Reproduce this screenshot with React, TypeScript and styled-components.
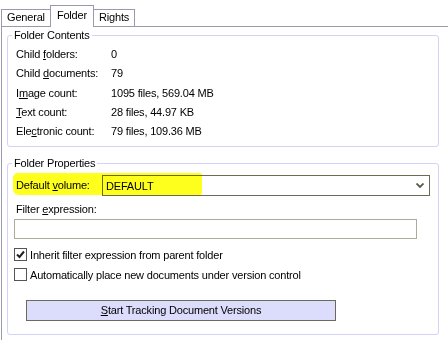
import React from 'react';
import styled, { createGlobalStyle } from 'styled-components';

const Global = createGlobalStyle`
  html, body { margin: 0; padding: 0; background: #fff; }
  body {
    font-family: 'Liberation Sans', Arial, sans-serif;
    font-size: 11px;
    letter-spacing: -0.18px;
    color: #000;
  }
`;

const Page = styled.div`
  width: 448px;
  height: 340px;
  overflow: hidden;
  background: #fff;
`;

const TabStrip = styled.div`
  display: flex;
  align-items: flex-end;
  height: 26px;
  padding-left: 1px;
  position: relative;
  z-index: 1;
`;

const Tab = styled.div<{ $active?: boolean }>`
  box-sizing: border-box;
  position: relative;
  height: ${p => (p.$active ? '22px' : '17px')};
  padding: ${p => (p.$active ? '2px 6px 0' : '0 5px')};
  margin: ${p => (p.$active ? '0 -1px -1px' : '0')};
  z-index: ${p => (p.$active ? 2 : 1)};
  border: 1px solid #9a9aae;
  border-bottom: none;
  background: #fff;
  line-height: 15px;
  white-space: nowrap;
`;

const Panel = styled.div`
  margin-left: 1px;
  border-top: 1px solid #9a9aae;
  border-left: 1px solid #9a9aae;
  height: 320px;
  display: flex;
  flex-direction: column;
`;

const Group = styled.fieldset<{ $top: number; $pt: number; $pb: number }>`
  margin: ${p => p.$top}px 9px 0 5px;
  padding: ${p => p.$pt}px 6px ${p => p.$pb}px 6px;
  border: 1px solid #d2d2fa;
  border-radius: 3px;
  min-width: 0;
`;

const Legend = styled.legend`
  padding: 0 2px;
  margin-left: -2px;
  line-height: 13px;
`;

const InfoGrid = styled.div`
  display: grid;
  grid-template-columns: 95px 1fr;
  grid-auto-rows: 19.25px;
  align-items: center;
  padding-left: 2px;
`;

const Cell = styled.span`
  line-height: 13px;
  white-space: nowrap;
`;

const Key = styled.u`
  text-decoration: underline;
  text-underline-offset: 1px;
`;

const VolumeRow = styled.div`
  position: relative;
  display: flex;
  align-items: center;
  height: 21px;
`;

const FieldLabel = styled.span<{ $width?: number }>`
  box-sizing: border-box;
  width: ${p => (p.$width ? `${p.$width}px` : 'auto')};
  padding-left: 2px;
  line-height: 13px;
  white-space: nowrap;
`;

const Combo = styled.div`
  box-sizing: border-box;
  width: 328px;
  height: 21px;
  border: 1px solid #6b6b55;
  background: #fff;
  display: flex;
  align-items: center;
  justify-content: space-between;
  padding: 0 5px 0 3px;
`;

const Highlight = styled.div`
  position: absolute;
  left: -1px;
  top: -2px;
  width: 189px;
  height: 22px;
  background: #ffff1e;
  border-radius: 5px 2px 2px 6px;
  mix-blend-mode: multiply;
  pointer-events: none;
`;

const StackLabel = styled.div`
  margin-top: 7px;
  padding-left: 2px;
  line-height: 13px;
`;

const TextBox = styled.div`
  box-sizing: border-box;
  margin-top: 3px;
  width: 403px;
  height: 20px;
  border: 1px solid #acac9e;
  background: #fff;
`;

const CheckRow = styled.div<{ $mt: number }>`
  display: flex;
  align-items: center;
  gap: 3px;
  height: 15px;
  margin-top: ${p => p.$mt}px;
`;

const Box = styled.span`
  box-sizing: border-box;
  width: 13px;
  height: 13px;
  border: 1px solid #555;
  background: #fff;
  display: flex;
  align-items: center;
  justify-content: center;
`;

const Button = styled.div`
  box-sizing: border-box;
  margin: 18px 0 0 12px;
  width: 310px;
  height: 21px;
  border: 1px solid #6b6b55;
  background: #dcdcfc;
  display: flex;
  align-items: center;
  justify-content: center;
  line-height: 13px;
`;

const rows: Array<[React.ReactNode, string]> = [
  [<>Child <Key>f</Key>olders:</>, '0'],
  [<>Child <Key>d</Key>ocuments:</>, '79'],
  [<>I<Key>m</Key>age count:</>, '1095 files, 569.04 MB'],
  [<><Key>T</Key>ext count:</>, '28 files, 44.97 KB'],
  [<>Ele<Key>c</Key>tronic count:</>, '79 files, 109.36 MB'],
];

export default function App() {
  return (
    <Page>
      <Global />
      <TabStrip>
        <Tab>General</Tab>
        <Tab $active>Folder</Tab>
        <Tab>Rights</Tab>
      </TabStrip>
      <Panel>
        <Group $top={2} $pt={3} $pb={5}>
          <Legend>Folder Contents</Legend>
          <InfoGrid>
            {rows.map(([k, v], i) => (
              <React.Fragment key={i}>
                <Cell>{k}</Cell>
                <Cell>{v}</Cell>
              </React.Fragment>
            ))}
          </InfoGrid>
        </Group>
        <Group $top={10} $pt={5} $pb={13}>
          <Legend>Folder Properties</Legend>
          <VolumeRow>
            <FieldLabel $width={88}>Default <Key>v</Key>olume:</FieldLabel>
            <Combo>
              <span>DEFAULT</span>
              <svg width="8" height="5" viewBox="0 0 8 5">
                <path d="M0.5 0.5 L4 4 L7.5 0.5" fill="none" stroke="#5a5a46" strokeWidth="1.8" />
              </svg>
            </Combo>
            <Highlight />
          </VolumeRow>
          <StackLabel>Filter <Key>e</Key>xpression:</StackLabel>
          <TextBox />
          <CheckRow $mt={8}>
            <Box>
              <svg width="9" height="9" viewBox="0 0 9 9">
                <path d="M1 4.5 L3.5 7 L8 1.5" fill="none" stroke="#222" strokeWidth="2" />
              </svg>
            </Box>
            <span>Inherit filter expression from parent folder</span>
          </CheckRow>
          <CheckRow $mt={5}>
            <Box />
            <span>Automatically place new documents under version control</span>
          </CheckRow>
          <Button><span><Key>S</Key>tart Tracking Document Versions</span></Button>
        </Group>
      </Panel>
    </Page>
  );
}
